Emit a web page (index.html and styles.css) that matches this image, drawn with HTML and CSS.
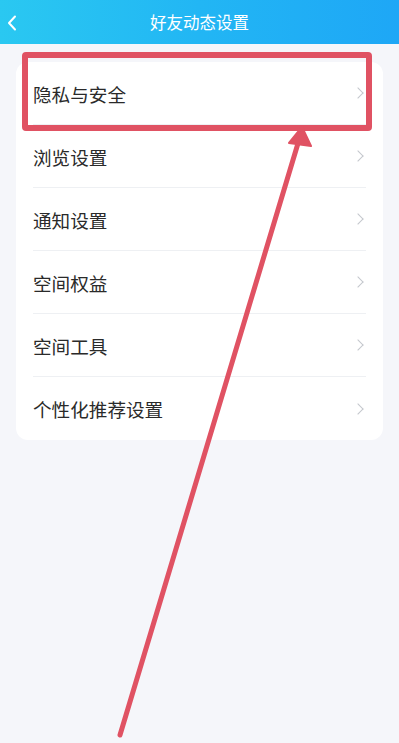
FILE: index.html
```html
<!DOCTYPE html>
<html lang="zh-CN">
<head>
    <meta charset="UTF-8">
    <meta name="viewport" content="width=device-width, initial-scale=1.0">
    <title>好友动态设置</title>
    <link rel="stylesheet" href="styles.css">
</head>
<body>
    <div class="page">
        <div class="header">
            <span class="back">
                <svg width="10" height="16" viewBox="0 0 10 16"><path d="M8 1.5 L2 8 L8 14.5" fill="none" stroke="#fff" stroke-width="2" stroke-linecap="round" stroke-linejoin="round"/></svg>
            </span>
            <h1>好友动态设置</h1>
        </div>

        <div class="card">
            <a href="#" class="row">隐私与安全<span class="chev"></span></a>
            <a href="#" class="row">浏览设置<span class="chev"></span></a>
            <a href="#" class="row">通知设置<span class="chev"></span></a>
            <a href="#" class="row">空间权益<span class="chev"></span></a>
            <a href="#" class="row">空间工具<span class="chev"></span></a>
            <a href="#" class="row">个性化推荐设置<span class="chev"></span></a>
        </div>

        <!-- annotation drawn over the screenshot -->
        <div class="highlight"></div>
        <svg class="arrow" width="399" height="743" viewBox="0 0 399 743">
            <line x1="120" y1="735" x2="299" y2="140" stroke="#e05263" stroke-width="5" stroke-linecap="round"/>
            <polygon points="302,127 289,143 311,146" fill="#e05263" stroke="#e05263" stroke-width="2" stroke-linejoin="round"/>
        </svg>
    </div>
</body>
</html>
```

FILE: styles.css
```css
body {
    margin: 0;
    padding: 0;
    background-color: #f5f6fa;
    font-family: "Noto Sans CJK SC", "Noto Sans", sans-serif;
}
.page {
    position: relative;
    width: 399px;
    height: 743px;
    overflow: hidden;
}
.header {
    height: 44px;
    display: flex;
    align-items: center;
    justify-content: center;
    position: relative;
    background: linear-gradient(90deg, #2ac8f1 0%, #22b6f4 50%, #1ea7f6 100%);
}
.header h1 {
    margin: 0;
    font-size: 16.5px;
    font-weight: normal;
    color: #fff;
}
.back {
    position: absolute;
    left: 7px;
    top: 12px;
}
.card {
    margin: 18px 16px 0 16px;
    background-color: #fff;
    border-radius: 12px;
    overflow: hidden;
}
.row {
    display: flex;
    align-items: center;
    justify-content: space-between;
    height: 63px;
    margin: 0 17px;
    box-sizing: border-box;
    border-bottom: 1px solid #eef0f3;
    font-size: 18.6px;
    color: #2a2a2a;
    text-decoration: none;
}
.row:last-child {
    border-bottom: none;
}
.chev {
    width: 7px;
    height: 7px;
    margin-right: 4px;
    border-top: 1.5px solid #c4c7cc;
    border-right: 1.5px solid #c4c7cc;
    transform: rotate(45deg);
}
.highlight {
    position: absolute;
    left: 22px;
    top: 52px;
    width: 350px;
    height: 79px;
    box-sizing: border-box;
    border: 6px solid #e05263;
    border-radius: 4px;
}
.arrow {
    position: absolute;
    left: 0;
    top: 0;
}
```
